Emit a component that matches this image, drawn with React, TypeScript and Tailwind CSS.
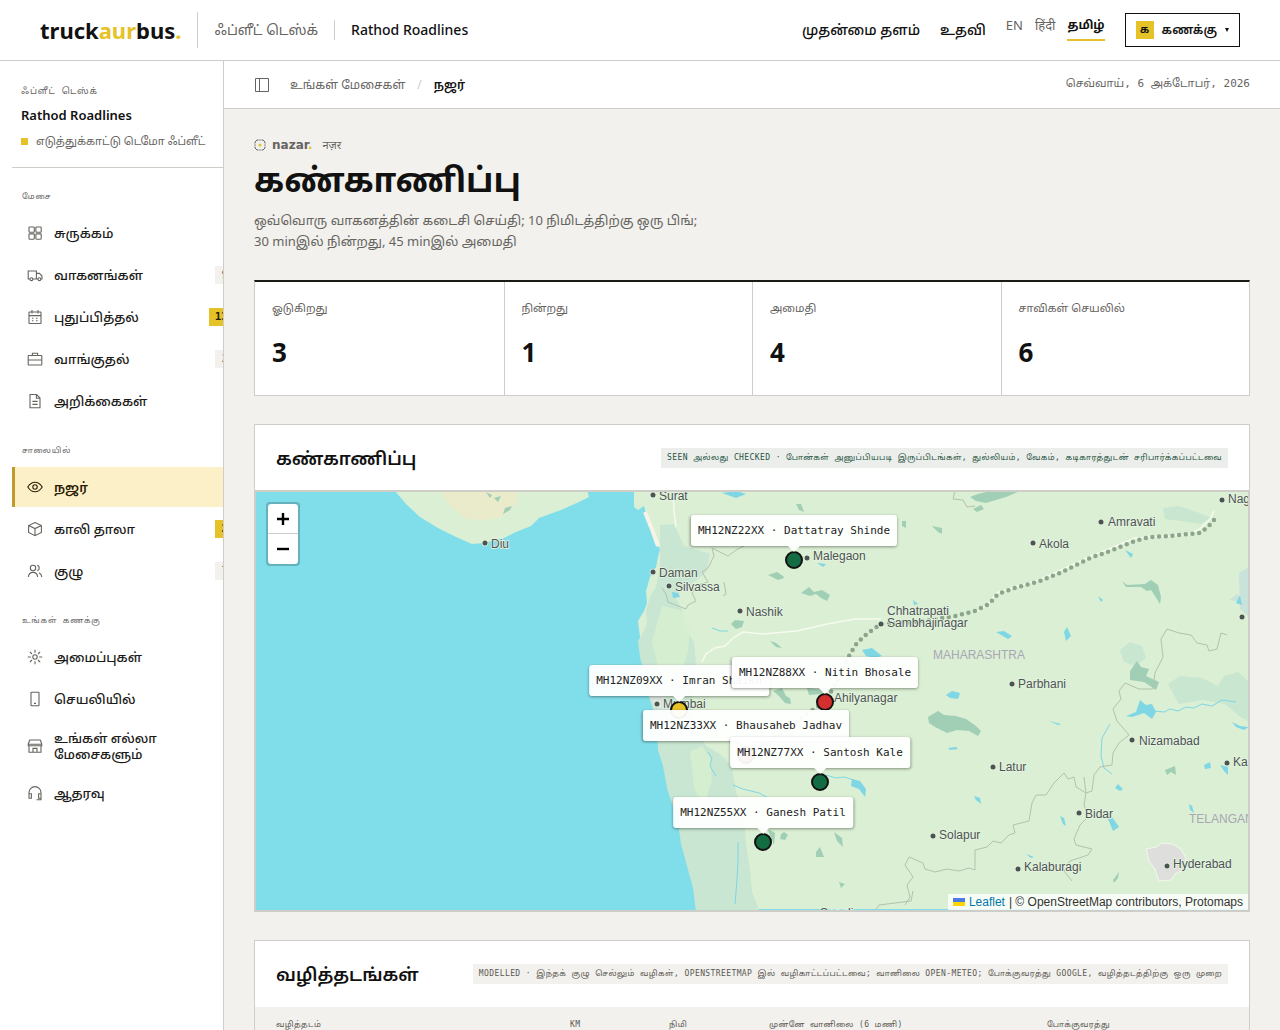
import React from "react";

const SANS = "font-['Noto_Sans','Noto_Sans_Tamil','Noto_Sans_Devanagari',sans-serif]";
const MONO = "font-['DejaVu_Sans_Mono','Noto_Sans_Tamil','Noto_Sans',monospace]";

const icons: Record<string, React.ReactNode> = {
  grid: (
    <>
      <rect x="2" y="2" width="5.3" height="5.3" rx=".6" />
      <rect x="8.9" y="2" width="5.3" height="5.3" rx=".6" />
      <rect x="2" y="8.9" width="5.3" height="5.3" rx=".6" />
      <rect x="8.9" y="8.9" width="5.3" height="5.3" rx=".6" />
    </>
  ),
  truck: (
    <>
      <path d="M3 12H1.2V4h8.2v8H5.8M9.4 6.4h3L15 9v3h-1.2M11 12H9.4" />
      <circle cx="4.4" cy="12.2" r="1.4" />
      <circle cx="12.4" cy="12.2" r="1.4" />
    </>
  ),
  calendar: (
    <>
      <rect x="2" y="3" width="12" height="11.5" rx=".5" />
      <path d="M2 6.6h12M5 1v3.4M11 1v3.4M5 9.3h1.4M9 9.3h1.6M5 11.8h1.4M9 11.8h1.6" />
    </>
  ),
  briefcase: (
    <>
      <rect x="1.2" y="4.5" width="13.6" height="9.5" rx=".6" />
      <path d="M5.4 4.5V2.3h5.2v2.2M1.2 9h13.6" />
    </>
  ),
  file: <path d="M3 1.5h6.6L13 5v9.8H3zM9.4 1.6v3.6H13M5.4 8.4h5.2M5.4 11.4h5.2" />,
  eye: (
    <>
      <path d="M.8 8C3 4.4 5.4 3.2 8 3.2S13 4.4 15.2 8C13 11.6 10.6 12.8 8 12.8S3 11.6.8 8z" />
      <circle cx="8" cy="8" r="2.2" />
    </>
  ),
  box: <path d="M8 1.5l6.4 3v7L8 14.7l-6.4-3.2v-7zM1.6 4.5L8 7.6l6.4-3.1M8 7.6v7.1" />,
  users: (
    <>
      <circle cx="6" cy="5" r="2.7" />
      <path d="M1.4 14c.3-3 1.900-4.600 4.600-4.600S10.300 11 10.600 14M10.300 2.400a2.700 2.700 0 010 5.200M12 9.800c1.700.7 2.600 2 2.800 4.200" />
    </>
  ),
  gear: (
    <>
      <circle cx="8" cy="8" r="2.2" />
      <path d="M8 .8v3M8 12.2v3M.8 8h3M12.2 8h3M2.9 2.9L5 5M11 11l2.1 2.1M2.9 13.1L5 11M11 5l2.1-2.1" />
    </>
  ),
  phone: (
    <>
      <rect x="4" y="1.2" width="8" height="13.6" rx=".6" />
      <path d="M7 12.4h2" />
    </>
  ),
  store: <path d="M1.2 6.2L2.7 2h10.6l1.5 4.2M1.2 6.2h13.600M2 7.800v6.400h12V7.800M1.200 6.200v1.600h13.600V6.200M6 14v-3.600h4V14" />,
  headset: (
    <path d="M2 11V7.6a6 6 0 0112 0V11M2 8.8h2.400v4.400H2zM11.600 8.800H14v4.400h-2.400zM14 13v1.800H9.600" />
  ),
};

const Icon = ({ name }: { name: string }) => (
  <svg viewBox="0 0 16 16" className="size-4 shrink-0" fill="none" stroke="currentColor" strokeWidth="1.1" aria-hidden="true">
    {icons[name]}
  </svg>
);

type Item = { icon: string; label: string; badge?: string; hot?: boolean; active?: boolean };

const sections: { title: string; items: Item[] }[] = [
  {
    title: "மேசை",
    items: [
      { icon: "grid", label: "சுருக்கம்" },
      { icon: "truck", label: "வாகனங்கள்", badge: "9" },
      { icon: "calendar", label: "புதுப்பித்தல்", badge: "13", hot: true },
      { icon: "briefcase", label: "வாங்குதல்", badge: "2" },
      { icon: "file", label: "அறிக்கைகள்" },
    ],
  },
  {
    title: "சாலையில்",
    items: [
      { icon: "eye", label: "நஜர்", active: true },
      { icon: "box", label: "காலி தாலா", badge: "2", hot: true },
      { icon: "users", label: "குழு", badge: "7" },
    ],
  },
  {
    title: "உங்கள் கணக்கு",
    items: [
      { icon: "gear", label: "அமைப்புகள்" },
      { icon: "phone", label: "செயலியில்" },
      { icon: "store", label: "உங்கள் எல்லா மேசைகளும்" },
      { icon: "headset", label: "ஆதரவு" },
    ],
  },
];

const stats = [
  { label: "ஓடுகிறது", value: 3 },
  { label: "நின்றது", value: 1 },
  { label: "அமைதி", value: 4 },
  { label: "சாவிகள் செயலில்", value: 6 },
];

// map canvas origin, all map coordinates below are relative to it
const OX = 256;
const OY = 492;

const cities: { name: string; dot?: [number, number]; at: [number, number] }[] = [
  { name: "Diu", dot: [485, 543], at: [491, 548] },
  { name: "Surat", dot: [653, 495], at: [659, 500] },
  { name: "Daman", dot: [653, 572], at: [659, 577] },
  { name: "Silvassa", dot: [669, 586], at: [675, 591] },
  { name: "Nashik", dot: [740, 611], at: [746, 616] },
  { name: "Malegaon", dot: [807, 558], at: [813, 560] },
  { name: "Mumbai", dot: [657, 704], at: [663, 708] },
  { name: "Ahilyanagar", at: [834, 702] },
  { name: "Chhatrapati", at: [887, 615] },
  { name: "Sambhajinagar", dot: [881, 624], at: [887, 627] },
  { name: "Akola", dot: [1033, 543], at: [1039, 548] },
  { name: "Amravati", dot: [1101, 522], at: [1108, 526] },
  { name: "Nagpur", dot: [1222, 500], at: [1228, 503] },
  { name: "Parbhani", dot: [1012, 684], at: [1018, 688] },
  { name: "Nizamabad", dot: [1132, 740], at: [1139, 745] },
  { name: "Karimnagar", dot: [1227, 763], at: [1233, 766] },
  { name: "Latur", dot: [993, 767], at: [999, 771] },
  { name: "Bidar", dot: [1079, 813], at: [1085, 818] },
  { name: "Solapur", dot: [933, 836], at: [939, 839] },
  { name: "Kalaburagi", dot: [1018, 869], at: [1024, 871] },
  { name: "Hyderabad", dot: [1167, 866], at: [1173, 868] },
];

const markers = [
  { x: 679, y: 710, color: "#e6c229" },
  { x: 746, y: 755, color: "#d32f2f" },
  { x: 825, y: 702, color: "#d32f2f" },
  { x: 820, y: 782, color: "#146c43" },
  { x: 763, y: 842, color: "#146c43" },
  { x: 794, y: 560, color: "#146c43" },
];

const tips = [
  { plate: "MH12NZ09XX", driver: "Imran Shaikh", x: 679, y: 665 },
  { plate: "MH12NZ33XX", driver: "Bhausaheb Jadhav", x: 746, y: 710 },
  { plate: "MH12NZ88XX", driver: "Nitin Bhosale", x: 825, y: 657 },
  { plate: "MH12NZ77XX", driver: "Santosh Kale", x: 820, y: 737 },
  { plate: "MH12NZ55XX", driver: "Ganesh Patil", x: 763, y: 797 },
  { plate: "MH12NZ22XX", driver: "Dattatray Shinde", x: 794, y: 515 },
];

const Terrain = () => (
  <svg
    viewBox="256 492 992 418"
    width="992"
    height="418"
    className="absolute left-0 top-0 overflow-visible font-['Liberation_Sans',sans-serif]"
    fill="none"
  >
    {/* land */}
    <path
      fill="#daefd3"
      d="M634 480V507l4 3 6-4 4 15 5 10 4 14 3 4-2 8-2 10-6 10-4 14 1 12-3 8-6 10 2 16 3 12 1 12 5 16 5 15 3 20 1 18 5 16 4 22 5 16 6 18 3 22 6 18 6 22 5 20 1 25H2400V480z"
    />
    <path fill="#daefd3" d="M388 480l7 11 11 13 14 13 18 11 18 9 16 7 12-1 20-5 12-6 15-6 8-8 22-8 18-8 10-5-2-7V480z" />
    <path fill="#e9ebcb" d="M441 491l5 10 8 8 12 10 18 1 16-2 10-8 8-9-2-10z" />
    {/* coastal belt */}
    <path
      fill="#c8e6d2"
      d="M660 525l14-1 10 22 14 4 12 4-4 18-12 10-12 8-6 8 6 12 2 18 10 14 2 22-4 26 2 34 12 22 14 8 12 12 4 26 8 22 2 30 4 26 2 22 8 20H696l-3-24-6-22-6-22-3-22-6-18-5-16-4-22-5-16-1-18-3-20-5-15-5-16-1-12-3-12-2-16 6-10 3-8-1-12 4-14 6-10 2-10 2-8z"
    />
    <path fill="#d8efd0" d="M662 606l18 4 10 16-2 26-10 30-12 4-8-20-6-24zM690 752l12-6 8 12 2 22-8 26-10-18z" opacity=".85" />
    <path stroke="#f7f3e6" strokeWidth="4" d="M645 512l4 10 4 10 5 14" />
    <path fill="#c9e6d1" d="M1163 508l16-2 18 6 14 6-10 6-20-3-16-2zM1120 650l10-8 12 4 4 12-10 8-12-4zM1168 684l12-8 22 2 16 8 6-10 14-4 11 10v40l-10-6-14-12-22-4-24 4z" />
    <path fill="#c9e3da" d="M1239 573l10-6v50l-9-8zM1229 600l8-6 6 8z" />

    {/* forests */}
    <path
      fill="#a0cfb5"
      d="M978 494l12-3h30l-14 6-20 6-10-2-6-4zM973 509l8-4 3 4-7 3zM928 717l10-6 6 4 12 1 10 3 10 7 5 5-3 5-9-5-12-1-10 3-12-6-6-4zM1130 671l7-10 4 6 8 2-3 7 13 6-3 8-12-8-14-2zM1122 581l5 4 18-1 6-4 7 5 3 12-1 7-5-8-4-6-4 1-6-4-15 0zM768 575l9-3 6 4 1 2-6 2zM801 593l8-6 5 5 8-2 8 5-3 6-6-3-5-4-6 2zM731 624l4-4 9 1-2 6-6 2zM773 691l9-3 4 8 4 2 1 6-6-1-6-7zM768 829l7 4-1 12-5-12zM781 834l3-2 4 3-3 5-5-1zM834 832l8 6 1 9-6-6zM816 852l4-5 4 10-8 0zM839 882l6 2-4 4zM807 688l18 2-4 4-12 1zM932 526l10 2 0 6-4-2-6-6zM902 521l4 0 0 7-4-2zM486 492l6 3-2 3zM494 498l7-2-3 6zM505 508l7-2-2 4-7 4zM1165 770l10-4 1 9-5-3-4 3zM1113 880l6-8-1 6-4 5zM796 504l5 0 3 8-5-2zM770 641l6 2 6 5-6-1z"
    />
    {/* lakes */}
    <path
      fill="#7fd6e4"
      d="M1126 716l10-4 4-12 6 5 6-1 4 8-4 7-8-6-12 4zM946 695l6-4 8 2-2 6-8-1zM862 650l10-2 10 8-8 2-8-2zM852 779l8 2 6 8-1 8-6-8-8-3zM996 632l8-1 8 5-4 3zM1064 632l3-5 4 9-5 5zM722 493l14-2 10 3-10 4zM1108 819l4-2 7 10-6 4zM1115 788l3-4 5 5-3 2zM1060 816l4 2 2 8-3-2zM974 796l6 2 1 6-5-4zM1204 765l6-3 1 6-6 1zM1220 765l8 2 0 8-4-4zM1189 804l3 2 2 7-4-3zM948 748l8-1 2 2-8 1zM1049 721l12 3-3 1zM1026 854l8 3-3 1zM1232 722l8 4 9 1-5 3-8-3zM1098 596l5 4-2 2zM1125 550l8 4-2 4zM817 563l9 1-3 3zM913 600l5 4-4 1zM1240 595l2 10-6-2zM672 592l6 1 2 4-7 1z"
    />
    <path
      stroke="#7fd6e4"
      d="M1154 711l10 1 6-3 8 2 8-4 8 1 8-4 10 2 10-6 14 2M1110 724l-8 14-1 18 3 12 8 6M708 752l4 6-2 8 6 10M733 785l10 4 16 4 8 4M826 775l10 3 8-1 10 3M738 842l0 18-1 20-2 24M712 628l8 3 8 0"
    />

    {/* state borders */}
    <path
      stroke="#b3c2b0"
      strokeWidth="1"
      d="M955 491l-2 8 10 1 4 7 8-1M712 548l2 8-6 12-6 4 6 10-10 3-6 8 4 8-8 4-2 4-8-3-10-4-2-8-4-6M712 548l16 8 8-6 8-4M724 582l2 12-3 2M905 905l5-8-3-12 6-8-8-12 4-8 14 6 2 6 10 3 12-3 12 2 10-3 6 2 0-20 12-3 6-6 8 2 8-8 6-2-2-8 16-4 3-18 4-8 10 0 8-12 10-10 4 6 6-2 2 10 10 6 6-2 2-16 6-8 12-2 1-12 6-10 10-8-12-14-4-12 8-10-2-8 6-8 14 6 14 0 2-16 8-16-2-18 6-10 12 4 12 2 6 8 10 2 2 6 8-2 4-16 6 2M1084 777l2 16-2 12 4 12-8 8-6 14 2 6 16 4-4 6-18 6-6 10 8 10M875 911l4-6 32-4 2-10"
    />

    {/* roads */}
    <path
      stroke="#f7fbef"
      strokeWidth="1.5"
      d="M1214 511l-4 8-10 10-10 5-20 2-35 2-26 11-20 8-30 14-20 9-24 7-18 6-10 12-12 8M881 619l-26 0-28 5-30 7-34 3-20-2-10 6-8 8-10 2-9 6-4 8M673 491l1 20 2 16"
    />
    {/* city sprawl */}
    <path fill="#dedfdc" stroke="#f4f8ee" d="M1146 849l10-2 6-4 10 1 8 4 6 10-3 12-8 4-4 6-12 1-4-12-6-8z" />
    <path fill="#dbe3df" d="M650 697l10-6 6 8 2 10-6 2-8-6z" />

    {/* route */}
    <path
      stroke="#8da58c"
      strokeWidth="4.5"
      strokeLinecap="round"
      strokeDasharray="0 6.7"
      d="M1214 520L1208 527L1200 533L1188 534L1170 536L1150 537L1135 541L1110 551L1090 558L1060 573L1040 581L1015 588L998 594L989 604L975 611L955 616L930 620L905 623L881 624L868 633L857 643L850 654L838 680L825 702L808 713L780 735L746 755"
    />

    <g fill="#a9a6b5" fontSize="12">
      <text x="933" y="659">MAHARASHTRA</text>
      <text x="1189" y="823">TELANGANA</text>
    </g>
    <g fill="#4c5453" fontSize="12" stroke="#e6f3e1" strokeWidth="1.5" paintOrder="stroke">
      {cities.map((c) => (
        <g key={c.name}>
          {c.dot && <circle cx={c.dot[0]} cy={c.dot[1]} r="2.5" />}
          <text x={c.at[0]} y={c.at[1]}>{c.name}</text>
        </g>
      ))}
      <circle cx="1242" cy="617" r="2.5" />
      <text x="820" y="917">Sangli</text>
    </g>

    {markers.map((m) => (
      <circle key={`${m.x}-${m.y}`} cx={m.x} cy={m.y} r="8" fill={m.color} stroke="#111" strokeWidth="2" />
    ))}
  </svg>
);

const FleetMap = () => (
  <div className="relative h-[420px] overflow-hidden border border-[#cfcdc8] bg-[#80deea]">
    <Terrain />

    {tips.map((t) => (
      <div
        key={t.plate}
        className={`absolute -translate-x-1/2 whitespace-nowrap rounded-[3px] bg-white/95 px-[7px] text-[11px] leading-[31px] text-[#222] shadow-[0_1px_3px_rgba(0,0,0,0.4)] ${MONO}`}
        style={{ left: t.x - OX, top: t.y - OY }}
      >
        {t.plate} · {t.driver}
        <span className="absolute left-1/2 top-full -ml-1.5 border-x-6 border-t-6 border-x-transparent border-t-white/95" />
      </div>
    ))}

    <div className="absolute left-2.5 top-2.5 flex flex-col rounded border-2 border-black/20 bg-clip-padding font-['Liberation_Sans',sans-serif]">
      <button aria-label="Zoom in" className="flex h-[30px] w-[30px] items-center justify-center rounded-t-sm border-b border-[#ccc] bg-white">
        <svg viewBox="0 0 14 14" className="size-3.5" stroke="#000" strokeWidth="2.4"><path d="M7 1v12M1 7h12" /></svg>
      </button>
      <button aria-label="Zoom out" className="flex h-[30px] w-[30px] items-center justify-center rounded-b-sm bg-white">
        <svg viewBox="0 0 14 14" className="size-3.5" stroke="#000" strokeWidth="2.4"><path d="M1 7h12" /></svg>
      </button>
    </div>

    <div className="absolute bottom-0 right-0 flex items-center bg-white/80 px-[5px] font-['Liberation_Sans',sans-serif] text-xs leading-4 text-[#333]">
      <svg viewBox="0 0 12 8" className="mr-1 h-2 w-3">
        <path fill="#4c7be1" d="M0 0h12v4H0z" />
        <path fill="#ffd500" d="M0 4h12v4H0z" />
      </svg>
      <a href="#leaflet" className="mr-1 text-[#0078a8]">Leaflet</a>
      <span>| © OpenStreetMap contributors, Protomaps</span>
    </div>
  </div>
);

const Sidebar = () => (
  <aside className="w-56 shrink-0 overflow-hidden border-r border-[#cfcdc8] bg-white pl-3">
    <div className="flex h-[107px] flex-col gap-1 border-b border-[#cfcdc8] pl-[9px] pt-[22px]">
      <span className={`text-[9px] leading-4 tracking-widest text-[#66645f] ${MONO}`}>ஃப்ளீட் டெஸ்க்</span>
      <span className="text-[13px] leading-6 font-semibold">Rathod Roadlines</span>
      <span className="flex items-center gap-2 whitespace-nowrap text-[11px] leading-5 text-[#66645f]">
        <span className="size-[7px] bg-[#e6c229]" />
        எடுத்துக்காட்டு டெமோ ஃப்ளீட்
      </span>
    </div>
    <nav className="w-[232px]">
      {sections.map((s) => (
        <div key={s.title} className="pt-[22px] first:pt-[21px]">
          <h2 className={`pl-2.5 text-[8px] leading-4 tracking-widest text-[#66645f] ${MONO}`}>{s.title}</h2>
          <ul className="mt-2 flex flex-col gap-0.5">
            {s.items.map((i) => (
              <li key={i.label}>
                <a
                  href="#desk"
                  className={`flex items-center gap-[11px] border-l-3 pl-3 pr-2.5 text-[13px] leading-4 font-medium ${
                    i.active ? "border-[#c09a2b] bg-[#fcf0c8] font-semibold text-[#2b1d05]" : "border-transparent text-[#1c1b19]"
                  } ${i.icon === "store" ? "min-h-[50px]" : "min-h-10"}`}
                >
                  <span className={i.active ? "" : "text-[#66645f]"}>
                    <Icon name={i.icon} />
                  </span>
                  <span className="max-w-[120px]">{i.label}</span>
                  {i.badge && (
                    <span
                      className={`ml-auto px-1.5 text-[11px] leading-[18px] ${MONO} ${
                        i.hot ? "bg-[#e6c229] font-semibold text-[#2b1d05]" : "bg-[#f2f1ed] text-[#66645f]"
                      }`}
                    >
                      {i.badge}
                    </span>
                  )}
                </a>
              </li>
            ))}
          </ul>
        </div>
      ))}
    </nav>
  </aside>
);

const Header = () => (
  <header className="flex h-[61px] shrink-0 items-center border-b border-[#cfcdc8] bg-white px-10">
    <a href="#home" className="text-[22px] leading-8 font-bold">
      truck<span className="text-[#e6c229]">aur</span>bus<span className="text-[#e6c229]">.</span>
    </a>
    <span className="ml-4 h-9 w-px bg-[#cfcdc8]" />
    <span className="ml-4 text-sm text-[#66645f]">ஃப்ளீட் டெஸ்க்</span>
    <span className="ml-4 h-5 w-px bg-[#cfcdc8]" />
    <span className="ml-4 text-sm font-medium">Rathod Roadlines</span>

    <nav className="ml-auto flex items-center gap-5 text-sm font-medium">
      <a href="#main">முதன்மை தளம்</a>
      <a href="#help">உதவி</a>
      <div className="mb-1 flex items-start gap-3 text-[13px] leading-5 font-normal text-[#66645f]">
        <a href="#en">EN</a>
        <a href="#hi">हिंदी</a>
        <a href="#ta" className="border-b-2 border-[#e6c229] pb-1 text-xs leading-5 font-bold text-[#111]">தமிழ்</a>
      </div>
      <button className="flex h-[34px] items-center gap-2 border border-[#111] px-2.5 text-xs font-semibold">
        <span className="flex size-[18px] items-center justify-center bg-[#e6c229] text-[10px] font-bold">க</span>
        கணக்கு
        <svg viewBox="0 0 4 4" className="size-1" fill="#111"><path d="M0 0h4L2 4z" /></svg>
      </button>
    </nav>
  </header>
);

const columns = [
  { label: "வழித்தடம்", width: "w-[294px]" },
  { label: "KM", width: "w-[99px]" },
  { label: "நிமி", width: "w-[100px]" },
  { label: "முன்னே வானிலை (6 மணி)", width: "w-[278px]" },
  { label: "போக்குவரத்து", width: "" },
];

const App: React.FC = () => {
  return (
    <div className={`flex h-screen flex-col overflow-hidden bg-[#f2f1ed] text-[#111] ${SANS}`}>
      <Header />
      <div className="flex min-h-0 flex-1">
        <Sidebar />
        <div className="flex min-w-0 flex-1 flex-col">
          <div className="flex h-12 shrink-0 items-center border-b border-[#cfcdc8] bg-white px-[30px] text-xs">
            <button aria-label="Toggle sidebar" className="text-[#66645f]">
              <svg viewBox="0 0 16 16" className="size-4" fill="none" stroke="currentColor">
                <path d="M1.5 1.5h13v13h-13zM5.5 1.5v13" />
              </svg>
            </button>
            <a href="#desks" className="ml-5 text-[#66645f]">உங்கள் மேசைகள்</a>
            <span className="mx-3 text-[#cfcdc8]">/</span>
            <span className="font-semibold">நஜர்</span>
            <span className={`ml-auto text-[11px] text-[#66645f] ${MONO}`}>செவ்வாய், 6 அக்டோபர், 2026</span>
          </div>

          <main className="flex-1 overflow-y-auto px-[30px] pt-7 [scrollbar-width:none]">
            <div className="flex h-4 items-center text-[#66645f]">
              <svg viewBox="0 0 12 12" className="size-3" fill="none" stroke="currentColor">
                <path d="M1 4.500V3l2-2h1.500M7.500 1H9l2 2v1.500M11 7.500V9l-2 2H7.500M4.500 11H3L1 9V7.500M5.300 1h1.400M5.300 11h1.400M1 5.300v1.400M11 5.300v1.400" />
                <circle cx="6" cy="6" r="1.5" fill="#e6c229" stroke="none" />
              </svg>
              <span className="ml-1.5 font-['DejaVu_Sans',sans-serif] text-xs font-bold">
                nazar<span className="text-[#e6c229]">.</span>
              </span>
              <span className="ml-2.5 text-[11px]">नज़र</span>
            </div>
            <h1 className="mt-1 text-[33px] leading-[45px] font-bold">கண்காணிப்பு</h1>
            <p className="mt-2 max-w-[460px] text-[13px] leading-[21px] text-[#66645f]">
              ஒவ்வொரு வாகனத்தின் கடைசி செய்தி; 10 நிமிடத்திற்கு ஒரு பிங்; 30 minஇல் நின்றது, 45 minஇல் அமைதி
            </p>

            <section className="mt-7 grid grid-cols-4 border-x border-b border-t-2 border-[#cfcdc8] border-t-[#1a1a17] bg-white">
              {stats.map((s) => (
                <div key={s.label} className="h-[113px] border-l border-[#cfcdc8] px-[17px] pt-4 first:border-l-0">
                  <div className="text-[11px] leading-5 text-[#66645f]">{s.label}</div>
                  <div className="mt-4 text-[26px] leading-9 font-bold">{s.value}</div>
                </div>
              ))}
            </section>

            <section className="mt-7 border border-[#cfcdc8] bg-white">
              <div className="flex h-[66px] items-center justify-between border-b border-[#cfcdc8] px-[21px]">
                <h2 className="text-lg font-semibold">கண்காணிப்பு</h2>
                <span className={`whitespace-nowrap bg-[#eceeeb] px-1.5 text-[8px] leading-5 tracking-wider text-[#26543f] ${MONO}`}>
                  SEEN அல்லது CHECKED · போன்கள் அனுப்பியபடி இருப்பிடங்கள், துல்லியம், வேகம், கடிகாரத்துடன் சரிபார்க்கப்பட்டவை
                </span>
              </div>
              <FleetMap />
            </section>

            <section className="mt-7 border border-[#cfcdc8] bg-white">
              <div className="flex h-[66px] items-center justify-between px-[21px]">
                <h2 className="text-lg font-semibold">வழித்தடங்கள்</h2>
                <span className={`whitespace-nowrap bg-[#f2f1ed] px-1.5 text-[8px] leading-5 tracking-wider text-[#5a5853] ${MONO}`}>
                  MODELLED · இந்தக் குழு செல்லும் வழிகள், OPENSTREETMAP இல் வழிகாட்டப்பட்டவை; வானிலை OPEN-METEO; போக்குவரத்து GOOGLE, வழித்தடத்திற்கு ஒரு முறை
                </span>
              </div>
              <table className={`w-full table-fixed bg-[#f2f1ed] text-[8px] text-[#5a5853] ${MONO}`}>
                <thead>
                  <tr>
                    {columns.map((c) => (
                      <th key={c.label} scope="col" className={`h-9 pl-[21px] text-left font-normal tracking-wider ${c.width}`}>
                        {c.label}
                      </th>
                    ))}
                  </tr>
                </thead>
              </table>
            </section>
          </main>
        </div>
      </div>
    </div>
  );
};

export default App;
